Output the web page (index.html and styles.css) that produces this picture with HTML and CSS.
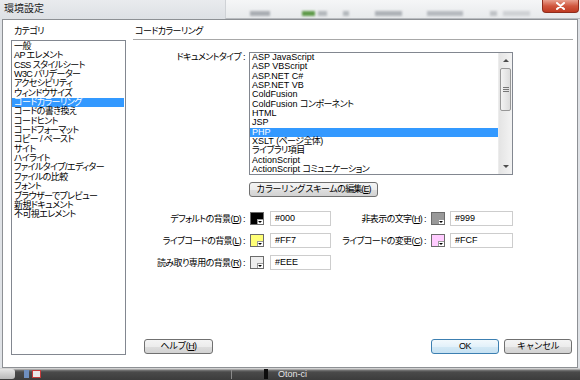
FILE: index.html
```html
<!DOCTYPE html>
<html lang="ja">
<head>
  <meta charset="UTF-8">
  <title>環境設定</title>
  <link rel="stylesheet" href="styles.css">
</head>
<body>
  <div class="window">
    <div class="titlebar">
      <div class="title">環境設定</div>
      <div class="backdrop">
        <div class="ghost-toolbar"></div>
        <div class="close">
          <svg width="11" height="8" viewBox="0 0 11 8"><path d="M2 1 L9 7 M9 1 L2 7" stroke="#fff" stroke-width="2" stroke-linecap="round"/></svg>
        </div>
      </div>
    </div>

    <div class="dialog">
      <div class="cat-col">
        <div class="caption">カテゴリ</div>
        <ul class="listbox cat-list">
          <li>一般</li>
          <li>AP エレメント</li>
          <li>CSS スタイルシート</li>
          <li>W3C バリデーター</li>
          <li>アクセシビリティ</li>
          <li>ウィンドウサイズ</li>
          <li class="sel">コードカラーリング</li>
          <li>コードの書き換え</li>
          <li>コードヒント</li>
          <li>コードフォーマット</li>
          <li>コピー / ペースト</li>
          <li>サイト</li>
          <li>ハイライト</li>
          <li>ファイルタイプ/エディター</li>
          <li>ファイルの比較</li>
          <li>フォント</li>
          <li>ブラウザーでプレビュー</li>
          <li>新規ドキュメント</li>
          <li>不可視エレメント</li>
        </ul>
      </div>

      <div class="panel">
        <div class="panel-head">コードカラーリング</div>

        <div class="doc-row">
          <div class="doc-label">ドキュメントタイプ :</div>
          <div class="doc-box">
            <ul class="doc-list">
              <li>ASP JavaScript</li>
              <li>ASP VBScript</li>
              <li>ASP.NET C#</li>
              <li>ASP.NET VB</li>
              <li>ColdFusion</li>
              <li>ColdFusion <span class="ja">コンポーネント</span></li>
              <li>HTML</li>
              <li>JSP</li>
              <li class="sel">PHP</li>
              <li>XSLT <span class="ja">(ページ全体)</span></li>
              <li class="ja">ライブラリ項目</li>
              <li>ActionScript</li>
              <li>ActionScript <span class="ja">コミュニケーション</span></li>
              <li>ActionScript <span class="ja">リモート</span></li>
              <li>C#</li>
            </ul>
            <div class="scrollbar">
              <div class="sb-btn"><span class="arrow up"></span></div>
              <div class="sb-thumb"><span class="grip"></span></div>
              <div class="sb-track"></div>
              <div class="sb-btn"><span class="arrow down"></span></div>
            </div>
          </div>
        </div>

        <button class="btn scheme">カラーリングスキームの編集(<u>E</u>)</button>

        <div class="colors">
          <div class="crow">
            <span class="clabel">デフォルトの背景(<u>D</u>) :</span>
            <span class="swatch c-000"></span>
            <span class="cinput">#000</span>
            <span class="clabel r">非表示の文字(<u>H</u>) :</span>
            <span class="swatch c-999"></span>
            <span class="cinput r">#999</span>
          </div>
          <div class="crow">
            <span class="clabel">ライブコードの背景(<u>L</u>) :</span>
            <span class="swatch c-ff7"></span>
            <span class="cinput">#FF7</span>
            <span class="clabel r">ライブコードの変更(<u>C</u>) :</span>
            <span class="swatch c-fcf"></span>
            <span class="cinput r">#FCF</span>
          </div>
          <div class="crow">
            <span class="clabel">読み取り専用の背景(<u>R</u>) :</span>
            <span class="swatch c-eee"></span>
            <span class="cinput">#EEE</span>
          </div>
        </div>

        <div class="actions">
          <button class="btn help">ヘルプ(<u>H</u>)</button>
          <button class="btn ok">OK</button>
          <button class="btn cancel">キャンセル</button>
        </div>
      </div>
    </div>

    <div class="taskbar">
      <span class="tb-start"></span>
      <span class="tb-icon blue"></span>
      <span class="tb-icon red"></span>
      <span class="tb-sep"></span>
      <span class="tb-bar"></span>
      <span class="tb-text">Oton-ci</span>
    </div>
  </div>
</body>
</html>
```

FILE: styles.css
```css
* {
  box-sizing: border-box;
}
body {
  margin: 0;
  background: #3f3f3f;
  font-family: "Liberation Sans", "Noto Sans CJK JP", sans-serif;
  font-size: 9px;
  color: #000;
  font-feature-settings: "palt";
}
ul {
  margin: 0;
  padding: 0;
  list-style: none;
}
/* japanese runs are narrower in the original UI font */
.ja,
.cat-list,
.caption,
.panel-head,
.doc-label,
.clabel,
.btn {
  letter-spacing: -0.6px;
}
.window {
  width: 580px;
  height: 380px;
  display: flex;
  flex-direction: column;
  background: #dfe2e6;
  overflow: hidden;
}

/* title bar */
.titlebar {
  flex: none;
  height: 19px;
  display: flex;
}
.title {
  width: 225px;
  padding: 2px 0 0 4px;
  font-size: 10px;
  line-height: 13px;
  color: #1b1b1b;
  background: linear-gradient(#e9ebee, #dde0e4);
}
.backdrop {
  flex: 1;
  position: relative;
  background: linear-gradient(#f5f6f7, #e8eaec);
  border-left: 1px solid #cfd2d6;
  border-bottom: 1px solid #b9bcc0;
}
.ghost-toolbar {
  margin-top: 11px;
  height: 5px;
  filter: blur(1.2px);
  background: linear-gradient(to right,
    transparent 24px, #a9adb3 24px 44px,
    transparent 44px 76px, #5f9a4a 76px 89px,
    transparent 89px 92px, #b4b8bd 92px 101px,
    transparent 101px 117px, #b4b8bd 117px 123px,
    transparent 123px 149px, #aeb2b7 149px 176px,
    transparent 176px 201px, #b6babf 201px 237px,
    transparent 237px 264px, #bfc2c6 264px 271px,
    transparent 271px 277px, #cfd2d5 277px 304px,
    transparent 304px);
}
.close {
  position: absolute;
  right: 1px;
  top: 0;
  width: 37px;
  height: 13px;
  display: flex;
  align-items: center;
  justify-content: center;
  background: linear-gradient(#e9a08f, #d0573f 50%, #bf3a22);
  border: 1px solid #8e2c1c;
  border-top: 0;
  border-radius: 0 0 4px 4px;
}

/* dialog body */
.dialog {
  flex: none;
  height: 349px;
  margin: 0 2px 0 2px;
  padding: 5px 4px 12px 8px;
  display: flex;
  background: #fff;
  border: 1px solid #8d9094;
}
.cat-col {
  width: 115px;
  display: flex;
  flex-direction: column;
}
.caption {
  height: 12px;
  line-height: 12px;
  padding-left: 3px;
  margin-bottom: 3px;
}
.listbox {
  flex: 1;
  border: 1px solid #828790;
  padding-top: 1px;
}
.listbox li,
.doc-list li {
  height: 9.35px;
  line-height: 9.35px;
  padding-left: 2px;
  white-space: nowrap;
}
.cat-list li.sel {
  margin: 0 1px 0 0;
}
li.sel {
  background: #3399ff;
  color: #fff;
}

.panel {
  flex: 1;
  margin-left: 7px;
  display: flex;
  flex-direction: column;
}
.panel-head {
  height: 15px;
  line-height: 12px;
  padding-left: 2px;
  border-bottom: 1px solid #a8a8a8;
}

.doc-row {
  display: flex;
  margin-top: 12px;
}
.doc-label {
  width: 112px;
  margin-right: 4px;
  text-align: right;
  line-height: 11px;
}
.doc-box {
  width: 264px;
  height: 123px;
  display: flex;
  border: 1px solid #828790;
}
.doc-list {
  flex: 1;
  overflow: hidden;
}

.scrollbar {
  width: 14px;
  display: flex;
  flex-direction: column;
  background: linear-gradient(to right, #e4e4e4, #f3f3f3);
  border-left: 1px solid #ececec;
}
.sb-btn {
  height: 15px;
  display: flex;
  align-items: center;
  justify-content: center;
}
.arrow {
  width: 0;
  height: 0;
  border-left: 3px solid transparent;
  border-right: 3px solid transparent;
}
.arrow.up {
  border-bottom: 3px solid #4d4d4d;
}
.arrow.down {
  border-top: 3px solid #4d4d4d;
}
.sb-thumb {
  height: 43px;
  margin: 0 1px;
  display: flex;
  align-items: center;
  justify-content: center;
  border: 1px solid #979797;
  border-radius: 2px;
  background: linear-gradient(to right, #f3f3f3, #dcdcdc);
}
.grip {
  width: 6px;
  height: 5px;
  background: repeating-linear-gradient(#777 0 1px, transparent 1px 2px);
}
.sb-track {
  flex: 1;
}

/* buttons */
.btn {
  height: 15px;
  padding: 0;
  font-family: inherit;
  font-size: 9px;
  line-height: 13px;
  color: #000;
  text-align: center;
  white-space: nowrap;
  border: 1px solid #707070;
  border-radius: 3px;
  background: linear-gradient(#f4f4f4, #ececec 50%, #dedede 51%, #d2d2d2);
}
.scheme {
  width: 129px;
  margin: 7px 0 0 116px;
  align-self: flex-start;
  letter-spacing: -0.9px;
}
.actions {
  margin: auto 1px 1px 0;
  display: flex;
}
.help {
  width: 69px;
  margin-left: 11px;
}
.ok {
  width: 68px;
  margin-left: auto;
  border-color: #3c7fb1;
  background: linear-gradient(#f2f9fd, #e3f1fa 50%, #d3e9f6 51%, #c6e1f2);
}
.cancel {
  width: 68px;
  margin-left: 5px;
}

/* colour settings */
.colors {
  margin-top: 14px;
  display: flex;
  flex-direction: column;
  gap: 7px;
}
.crow {
  height: 15px;
  display: flex;
  align-items: center;
}
.clabel {
  width: 112px;
  text-align: right;
  white-space: nowrap;
}
.clabel.r {
  width: 95px;
}
.swatch {
  position: relative;
  width: 14px;
  height: 13px;
  margin-left: 5px;
  border: 1px solid #6b6b6b;
}
.swatch::before {
  content: "";
  position: absolute;
  right: 0;
  bottom: 0;
  width: 5px;
  height: 4px;
  background: #fff;
  border-left: 1px solid #9a9a9a;
  border-top: 1px solid #9a9a9a;
}
.swatch::after {
  content: "";
  position: absolute;
  right: 1px;
  bottom: 1px;
  border-left: 2px solid transparent;
  border-right: 2px solid transparent;
  border-top: 2px solid #000;
}
.c-000 { background: #000; }
.c-999 { background: #999; }
.c-ff7 { background: #ff7; }
.c-fcf { background: #fcf; }
.c-eee { background: #eee; }
.cinput {
  width: 61px;
  height: 15px;
  margin-left: 6px;
  padding-left: 4px;
  line-height: 13px;
  border: 1px solid #cdcdcd;
  background: #fff;
}
.cinput.r {
  width: 63px;
  margin-left: 5px;
}

/* taskbar strip */
.taskbar {
  flex: 1;
  display: flex;
  align-items: center;
  background: linear-gradient(#d4d4d4 0 1px, #7a7a7a 2px, #4a4a4a 4px, #3c3c3c);
}
.tb-start {
  width: 15px;
  height: 10px;
  border-radius: 0 3px 3px 0;
  background: linear-gradient(#e6e6e6, #b8b8b8);
}
.tb-icon {
  width: 5px;
  height: 8px;
  margin-left: 9px;
}
.tb-icon.blue {
  background: #6f8fbf;
}
.tb-icon.red {
  width: 9px;
  margin-left: 3px;
  border: 1px solid #c43c3c;
  background: #e9e9e9;
}
.tb-sep {
  width: 1px;
  height: 9px;
  margin-left: 190px;
  background: #8a8a8a;
}
.tb-bar {
  width: 4px;
  height: 10px;
  margin-left: 32px;
  background: #0d0d0d;
}
.tb-text {
  margin-left: 10px;
  font-size: 9px;
  line-height: 10px;
  color: #e6e6e6;
}
```
